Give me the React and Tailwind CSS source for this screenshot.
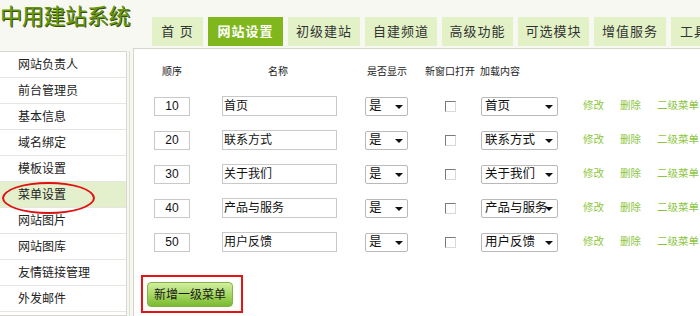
import React from "react";

const tabs = ["首 页", "网站设置", "初级建站", "自建频道", "高级功能", "可选模块", "增值服务", "工具"];
const tabW = [51, 75, 72, 72, 71, 71, 72, 72];
const side = ["网站负责人", "前台管理员", "基本信息", "域名绑定", "模板设置", "菜单设置", "网站图片", "网站图库", "友情链接管理", "外发邮件"];
const rows = [
  ["10", "首页", "首页"],
  ["20", "联系方式", "联系方式"],
  ["30", "关于我们", "关于我们"],
  ["40", "产品与服务", "产品与服务"],
  ["50", "用户反馈", "用户反馈"],
];

function Select({ text, w }) {
  return (
    <div className={`${w} relative h-[19px] flex items-center bg-white border border-[#b9b9b9] rounded-[2px] pl-[3px] text-[12.5px] text-[#111] leading-none overflow-hidden whitespace-nowrap`}>
      <span>{text}</span>
      <span className="absolute right-[4px] top-[7px] w-0 h-0 border-l-[4px] border-r-[4px] border-t-[4px] border-l-transparent border-r-transparent border-t-[#111]"></span>
    </div>
  );
}

export default function App() {
  return (
    <div className="w-[700px] h-[316px] overflow-hidden bg-[#f8f8f3] font-['Liberation_Sans','Noto_Sans_CJK_SC',sans-serif] text-[#222]">
      {/* header */}
      <div className="flex h-[48px]">
        <div className="w-[152px] shrink-0 pt-[4px] text-[22px] leading-[26px] text-[#66990a] [text-shadow:1px_1px_0_#3a4a10] tracking-[-0.3px]">
          中用建站系统
        </div>
        <div className="flex gap-[5px] pt-[17px] h-[46px]">
          {tabs.map((t, i) => (
            <div
              key={t}
              style={{ width: tabW[i] }}
              className={
                i === 1
                  ? "shrink-0 h-[29px] flex items-center justify-center bg-[#80b71c] text-white font-bold text-[13px] tracking-[1px]"
                  : i === 7
                  ? "shrink-0 h-[29px] flex items-center pl-[9px] bg-[#e2f2c6] text-[#333] text-[13px] tracking-[1px]"
                  : "shrink-0 h-[29px] flex items-center justify-center bg-[#e2f2c6] text-[#333] text-[13px] tracking-[1px]"
              }
            >
              {t}
            </div>
          ))}
        </div>
      </div>

      {/* body */}
      <div className="flex">
        {/* sidebar */}
        <div className="relative w-[127px] shrink-0 mt-[3px] border border-l-0 border-[#d6d6ce] bg-white">
          {side.map((s, i) => (
            <div
              key={s}
              className={
                "h-[26px] flex items-center pl-[18px] text-[12px] border-b border-[#e6e6e0] " +
                (i === 5 ? "bg-[#e3f0cb]" : "bg-white")
              }
            >
              {s}
            </div>
          ))}
          <div className="absolute left-[2px] top-[130px] w-[93px] h-[32px] rounded-[50%] border-2 border-[#e01010]"></div>
        </div>
        <div className="w-[2px] shrink-0"></div>
        <div className="w-[1px] shrink-0 mt-[3px] bg-[#dcdcd4]"></div>
        <div className="w-[3px] shrink-0"></div>

        {/* content */}
        <div className="flex-1 h-[268px] bg-white border-l border-t border-[#d6d6ce]">
          <div className="flex items-center h-[20px] mt-[12px] text-[10px] text-[#222] whitespace-nowrap">
            <div className="shrink-0 ml-[28px] w-[20px]">顺序</div>
            <div className="shrink-0 ml-[86px] w-[20px]">名称</div>
            <div className="shrink-0 ml-[79px] w-[40px]">是否显示</div>
            <div className="shrink-0 ml-[18px] w-[50px]">新窗口打开</div>
            <div className="shrink-0 ml-[5px] w-[40px]">加载内容</div>
          </div>
          <div className="mt-[8px]">
            {rows.map((r) => (
              <div key={r[0]} className="flex items-center h-[34px] whitespace-nowrap">
                <div className="shrink-0 ml-[20px] w-[36px] h-[19px] border border-[#c9c9c9] bg-white flex items-center justify-center text-[12px] text-[#111]">
                  {r[0]}
                </div>
                <div className="shrink-0 ml-[32px] w-[115px] h-[20px] border border-[#c9c9c9] bg-white flex items-center pl-[1px] text-[12px] text-[#111]">
                  {r[1]}
                </div>
                <div className="shrink-0 ml-[28px]">
                  <Select text="是" w="w-[43px]" />
                </div>
                <div className="shrink-0 ml-[37px] w-[11px] h-[11px] border border-t-[#7a7a7a] border-l-[#7a7a7a] border-r-[#d8d8d8] border-b-[#d8d8d8] bg-white"></div>
                <div className="shrink-0 ml-[25px]">
                  <Select text={r[2]} w="w-[77px]" />
                </div>
                <div className="shrink-0 ml-[25px] w-[21px] text-[10.5px] text-[#8cc63e]">修改</div>
                <div className="shrink-0 ml-[16px] w-[21px] text-[10.5px] text-[#8cc63e]">删除</div>
                <div className="shrink-0 ml-[16px] text-[10.5px] text-[#8cc63e]">二级菜单</div>
              </div>
            ))}
          </div>
          <div className="mt-[16px] ml-[7px] w-[102px] h-[38px] border-2 border-[#e41414] pl-[4px] pt-[5px]">
            <div className="w-[86px] h-[25px] rounded-[4px] border border-[#86b24a] bg-gradient-to-b from-[#d2efa0] via-[#a6d862] to-[#78bb2c] flex items-center justify-center text-[12px] text-[#1a1a1a]">
              新增一级菜单
            </div>
          </div>
        </div>
      </div>
    </div>
  );
}
